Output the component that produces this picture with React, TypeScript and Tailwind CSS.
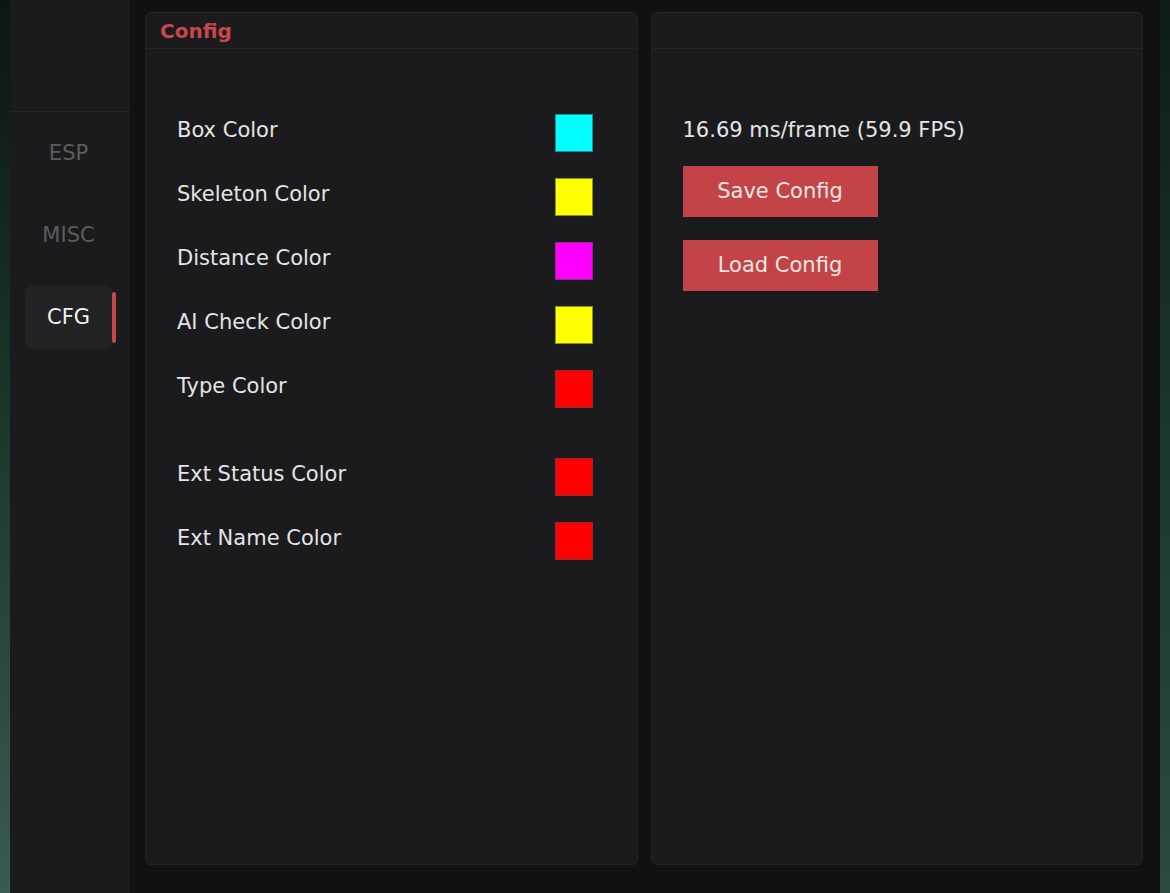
import React from "react"

const font = { fontFamily: '"DejaVu Sans", Verdana, sans-serif' }

const colors = [
  { label: "Box Color", color: "bg-[#00ffff]", border: "border-[#1b8f96]" },
  { label: "Skeleton Color", color: "bg-[#ffff00]", border: "border-[#8f8f2a]" },
  { label: "Distance Color", color: "bg-[#ff00ff]", border: "border-[#8f2a8f]" },
  { label: "AI Check Color", color: "bg-[#ffff00]", border: "border-[#8f8f2a]" },
  { label: "Type Color", color: "bg-[#ff0000]", border: "border-[#8f2a3a]" },
]

const extColors = [
  { label: "Ext Status Color", color: "bg-[#ff0000]", border: "border-[#8f2a3a]" },
  { label: "Ext Name Color", color: "bg-[#ff0000]", border: "border-[#8f2a3a]" },
]

function ColorRow({ label, color, border }: { label: string; color: string; border: string }) {
  return (
    <div className="flex items-center h-[64px] pl-[31px]">
      <span className="w-[378px] text-[21px] text-[#e4e4e6] -mt-[4px]">{label}</span>
      <div className={`w-[38px] h-[38px] border ${color} ${border}`} />
    </div>
  )
}

function SideItem({ label, active }: { label: string; active?: boolean }) {
  return (
    <div className="flex items-center">
      <div
        className={`ml-[15px] w-[87px] h-[63px] rounded-md flex items-center justify-center text-[21px] ${
          active ? "bg-[#232325] text-[#f2f2f2]" : "text-[#5c5c5f]"
        }`}
      >
        {label}
      </div>
      {active && <div className="w-[4px] h-[51px] bg-[#c7454a] rounded-sm" />}
    </div>
  )
}

export default function App() {
  return (
    <div className="w-full h-[893px] flex bg-[#0f1011] overflow-hidden" style={font}>
      <div className="w-[10px] h-full bg-gradient-to-b from-[#0b1712] via-[#1c3a2c] to-[#3a5a55]" />

      <div className="flex-1 flex">
        {/* sidebar */}
        <div className="w-[120px] h-full bg-[#1b1b1d] flex flex-col">
          <div className="h-[112px] border-b border-[#242426]" />
          <div className="flex flex-col gap-[19px] pt-[10px]">
            <SideItem label="ESP" />
            <SideItem label="MISC" />
            <SideItem label="CFG" active />
          </div>
        </div>

        {/* main */}
        <div className="flex-1 flex gap-[13px] bg-[#111113] pl-[15px] pr-[17px] pt-[12px] pb-[28px]">
          <div className="flex-1 bg-[#1b1b1e] border border-[#242427] rounded-md flex flex-col">
            <div className="h-[36px] border-b border-[#252528] flex items-center px-[14px]">
              <span className="text-[20px] font-bold text-[#c9464b]">Config</span>
            </div>
            <div className="pt-[52px] flex flex-col">
              {colors.map((c) => (
                <ColorRow key={c.label} {...c} />
              ))}
              <div className="h-[24px]" />
              {extColors.map((c) => (
                <ColorRow key={c.label} {...c} />
              ))}
            </div>
          </div>

          <div className="flex-1 bg-[#1b1b1e] border border-[#242427] rounded-md flex flex-col">
            <div className="h-[36px] border-b border-[#252528]" />
            <div className="pt-[50px] pl-[31px] flex flex-col">
              <div className="h-[64px] flex items-center text-[21px] text-[#e4e4e6]">
                16.69 ms/frame (59.9 FPS)
              </div>
              <button className="mt-[3px] w-[195px] h-[51px] bg-[#c24447] text-[21px] text-[#f0e6e6]">
                Save Config
              </button>
              <button className="mt-[23px] w-[195px] h-[51px] bg-[#c24447] text-[21px] text-[#f0e6e6]">
                Load Config
              </button>
            </div>
          </div>
        </div>
      </div>

      <div className="w-[10px] h-full bg-gradient-to-b from-[#0e1d17] via-[#1c382c] to-[#2c4a42]" />
    </div>
  )
}
